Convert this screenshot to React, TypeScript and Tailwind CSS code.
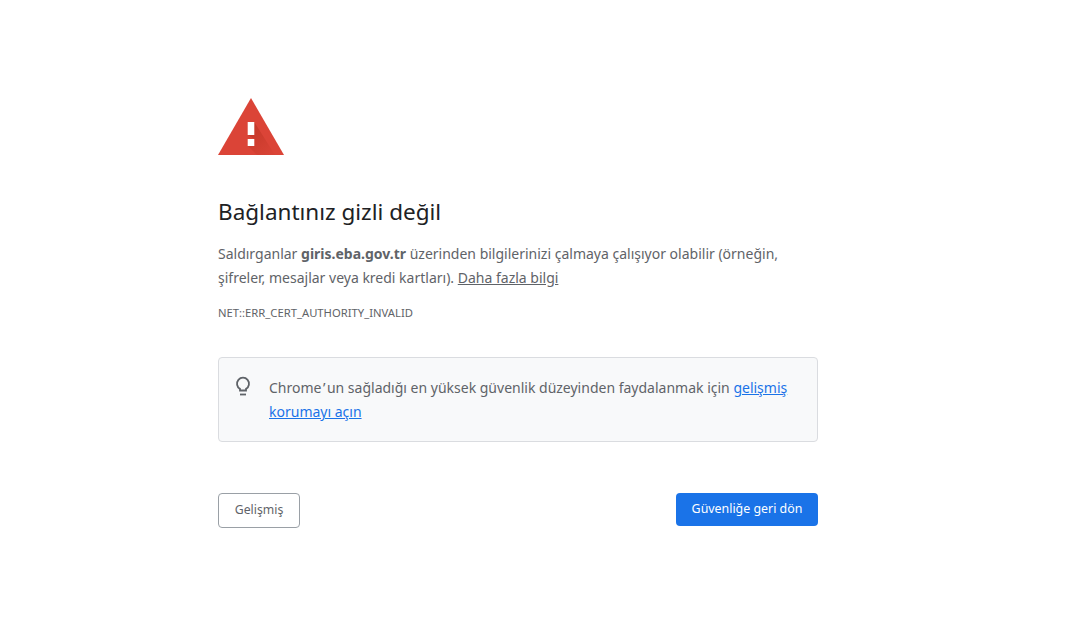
function WarningIcon() {
  return (
    <svg width="66" height="58" viewBox="0 0 66 58" className="block">
      <defs>
        <linearGradient id="shade" x1="0.2" y1="0.1" x2="0.8" y2="1">
          <stop offset="0" stopColor="#a52714" stopOpacity="0.4" />
          <stop offset="1" stopColor="#a52714" stopOpacity="0.05" />
        </linearGradient>
      </defs>
      <path d="M33 0 L66 57 L0 57 Z" fill="#db4437" />
      <path d="M36.3 24 L57 57 L39 57 L30 48 L36.3 41 L30 37 Z" fill="url(#shade)" />
      <rect x="29.7" y="24" width="6.6" height="13" fill="#fff" />
      <rect x="29.7" y="41" width="6.6" height="7" fill="#fff" />
    </svg>
  );
}

export default function App() {
  return (
    <div className="min-h-[630px] bg-white font-['Noto_Sans','Open_Sans',sans-serif] text-[14px] text-[#5f6368]">
      <div className="ml-[218px] w-[600px] pt-[98px]">
        <WarningIcon />

        <h1 className="mt-[40px] text-[22.5px] leading-[32px] font-normal text-[#202124]">Bağlantınız gizli değil</h1>

        <p className="mt-[14px] text-[14px] leading-[24px]">
          Saldırganlar <strong className="font-bold">giris.eba.gov.tr</strong> üzerinden bilgilerinizi çalmaya çalışıyor olabilir (örneğin,
          şifreler, mesajlar veya kredi kartları). <a className="underline">Daha fazla bilgi</a>
        </p>

        <div className="mt-[13px] text-[11.25px] leading-[20px]">NET::ERR_CERT_AUTHORITY_INVALID</div>

        <div className="mt-[34px] flex h-[85px] rounded border border-[#dadce0] bg-[#f8f9fa] pl-[14px] pt-[18px] pr-[20px]">
          <svg width="20" height="20" viewBox="0 0 20 20" fill="none" stroke="#5f6368" strokeWidth="1.8" className="shrink-0">
            <path d="M7 14.5v-1.6A6 6 0 1 1 13 12.9v1.6Z" />
            <path d="M7 18.5h6" />
          </svg>
          <p className="ml-[16px] text-[14px] leading-[24px]">
            Chrome<span className="px-[1.5px]">’</span>un sağladığı en yüksek güvenlik düzeyinden faydalanmak için <a className="text-[#1a73e8] underline">gelişmiş korumayı açın</a>
          </p>
        </div>

        <div className="mt-[51px] flex items-start justify-between">
          <button className="h-[35px] w-[82px] rounded border border-[#9aa0a6] bg-white text-[12.25px] text-[#5f6368]">Gelişmiş</button>
          <button className="h-[33px] w-[142px] rounded bg-[#1a73e8] text-[12.4px] text-white">Güvenliğe geri dön</button>
        </div>
      </div>
    </div>
  );
}
